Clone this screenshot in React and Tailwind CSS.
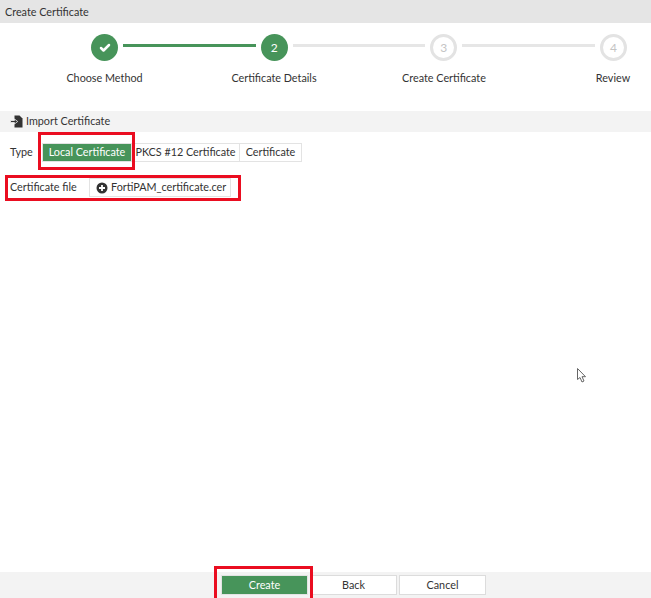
import { Check } from 'lucide-react';

function Circle({ children, done }) {
  if (done) {
    return (
      <div className="w-[27px] h-[27px] shrink-0 rounded-full bg-[#47945a] flex items-center justify-center text-white text-[12px]">
        {children}
      </div>
    );
  }
  return (
    <div className="w-[27px] h-[27px] shrink-0 rounded-full border-[3px] border-[#e3e3e3] bg-white flex items-center justify-center text-[#c4c4c4] text-[12px]">
      {children}
    </div>
  );
}

function Line({ done }) {
  return <div className={done ? 'flex-1 h-[3px] mx-[5px] -mt-[4px] bg-[#47945a]' : 'flex-1 h-[3px] mx-[5px] -mt-[4px] bg-[#e6e6e6]'} />;
}

function Segment({ children, active, className }) {
  const look = active
    ? 'bg-[#47945a] text-white border-[#e3e3e3]'
    : 'bg-white text-[#333] border-[#e3e3e3]';
  return <div className={`h-[19px] flex items-center justify-center border ${look} ${className}`}>{children}</div>;
}

function FooterButton({ children, primary }) {
  const look = primary
    ? 'bg-[#47945a] text-white border-[#e3e3e3]'
    : 'bg-white text-[#333] border-[#dcdcdc]';
  return <div className={`w-[87px] h-[20px] flex items-center justify-center border pt-px ${look}`}>{children}</div>;
}

export default function App() {
  return (
    <div className="relative w-[651px] h-[598px] overflow-hidden flex flex-col bg-white text-[10.8px] text-[#333] font-['Lato',sans-serif]">
      <div className="h-[23px] shrink-0 bg-[#e5e5e5] flex items-center pl-[5px] pt-px">Create Certificate</div>

      <div className="flex items-center pl-[91px] pr-[24px] pt-[11px]">
        <Circle done><Check size={12} strokeWidth={5} /></Circle>
        <Line done />
        <Circle done>2</Circle>
        <Line />
        <Circle>3</Circle>
        <Line />
        <Circle>4</Circle>
      </div>

      <div className="grid grid-cols-[170px_170px_170px_168px] pl-[19px] mt-[10px] leading-[14px]">
        <div className="text-center pl-px">Choose Method</div>
        <div className="text-center">Certificate Details</div>
        <div className="text-center">Create Certificate</div>
        <div className="text-center">Review</div>
      </div>

      <div className="h-[21px] mt-[26px] shrink-0 bg-[#f3f3f3] flex items-center pl-[10px] gap-[3px]">
        <svg width="13" height="13" viewBox="0 0 13 13" fill="#333">
          <path d="M4.500 0.500h5L12.500 3.500V12.500H4.500z" />
          <path d="M0.500 5.500h4V4l3.200 2.500-3.200 2.500V7.500h-4z" stroke="#f3f3f3" strokeWidth="0.800" />
        </svg>
        <span>Import Certificate</span>
      </div>

      <div className="flex items-center h-[19px] mt-[11px] pl-[10px]">
        <div className="w-[32px]">Type</div>
        <Segment active className="w-[90px]">Local Certificate</Segment>
        <Segment className="w-[108px] border-l-0">PKCS #12 Certificate</Segment>
        <Segment className="w-[62px] border-l-0">Certificate</Segment>
      </div>

      <div className="flex items-center h-[19px] mt-[16px] pl-[10px]">
        <div className="w-[79px]">Certificate file</div>
        <div className="w-[142px] h-[19px] border border-[#e3e3e3] flex items-center pl-[6px] gap-[3px]">
          <svg className="shrink-0" width="12" height="12" viewBox="0 0 12 12">
            <circle cx="6" cy="6" r="5.500" fill="#333" />
            <path d="M6 3v6M3 6h6" stroke="#fff" strokeWidth="1.800" />
          </svg>
          <span>FortiPAM_certificate.cer</span>
        </div>
      </div>

      <div className="flex-1" />

      <div className="h-[26px] shrink-0 bg-[#f3f3f3] flex items-start gap-[2px] pt-[3px] pl-[221px]">
        <FooterButton primary>Create</FooterButton>
        <FooterButton>Back</FooterButton>
        <FooterButton>Cancel</FooterButton>
      </div>

      {/* red annotation boxes drawn over the screenshot */}
      <div className="absolute left-[38px] top-[132px] w-[97px] h-[38px] border-[3px] border-[#ea0d20]" />
      <div className="absolute left-[5px] top-[175px] w-[236px] h-[26px] border-[3px] border-[#ea0d20]" />
      <div className="absolute left-[214px] top-[566px] w-[99px] h-[32px] border-[3px] border-b-0 border-[#ea0d20]" />

      {/* mouse pointer */}
      <svg className="absolute left-[576px] top-[367px]" width="12" height="17" viewBox="0 0 12 17" fill="#fff" stroke="#666" strokeWidth="1">
        <path d="M1.500 1.500v11l2.500-2 2 4.500 2-1-2-4.300h3.500z" />
      </svg>
    </div>
  );
}
